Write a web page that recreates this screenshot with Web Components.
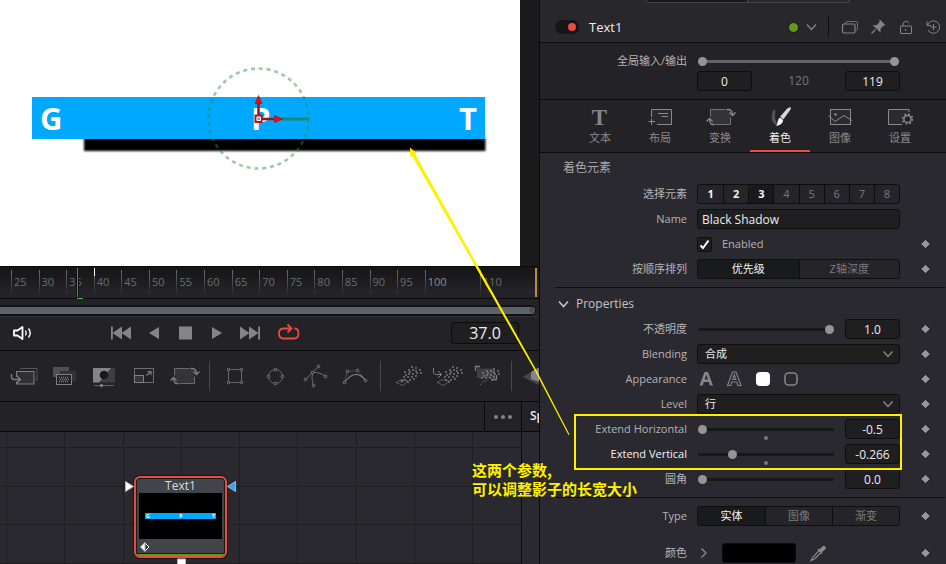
<!DOCTYPE html>
<html lang="zh-CN">
<head>
<meta charset="utf-8">
<title>Text1 - Fusion</title>
<style>
html,body{margin:0;min-height:100%;background:#232226}
body{font-family:"Open Sans","Noto Sans CJK SC",sans-serif;font-size:11px;line-height:16px;color:#b4b4b6;overflow:hidden}
</style>
</head>
<body>
<fusion-app></fusion-app>
<script>
const BASE = `
*{box-sizing:border-box}
button{appearance:none;border:0;margin:0;padding:0;background:none;font:inherit;color:inherit;display:block}
input,select{font:inherit;color:inherit;margin:0;border-radius:3px}
svg{display:block;fill:none;stroke:currentColor}
`;
function define(tag, css, render) {
  customElements.define(tag, class extends HTMLElement {
    connectedCallback() {
      if (this.shadowRoot) return;
      this.attachShadow({mode: 'open'}).innerHTML =
        `<style>${BASE}${css}</style>${render((n, d = '') => this.getAttribute(n) ?? d)}`;
    }
  });
}

/* ---------- inspector fields ---------- */
const FIELD = `
:host{display:grid;grid-template-columns:157px minmax(0,1fr) 46px;align-items:center;min-height:20px}
:host([active]) .label{color:#f2f2f2}
.label{text-align:right;padding-right:10px;white-space:nowrap}
.box{width:100%;height:20px;background:#1f1f1f;border:1px solid #0e0e10;color:#ececec;font-size:12px;padding:0 4px;outline:0}
.num{text-align:center}
.slide{display:grid;grid-template-columns:minmax(0,1fr) 55px;column-gap:11px;padding-left:1px;align-items:center}
.rail{position:relative;display:grid;align-items:center}
.rail i{position:absolute;left:50%;top:100%;width:4px;height:4px;margin:2px 0 0 -2px;border-radius:50%;background:#77777b}
input[type=range]{appearance:none;width:100%;height:10px;background:none;outline:0}
input[type=range]::-webkit-slider-runnable-track{height:3px;background:#18181a;border-radius:2px}
input[type=range]::-webkit-slider-thumb{appearance:none;width:9px;height:9px;margin-top:-3px;border-radius:50%;background:#959595}
`;
define('key-diamond', `:host{display:block;padding-left:17px}`, () =>
  `<button aria-label="Keyframe"><svg width="16" height="16"><path d="M8.500 3.200 13.500 8 8.500 12.800 3.500 8z" fill="#98989b" stroke="#131315"/></svg></button>`);

define('field-slider', FIELD, a => `
<label class="label" for="s">${a('label')}</label>
<div class="slide"><div class="rail"><input id="s" type="range" min="${a('min','0')}" max="${a('max','1')}" step="0.001" value="${a('value')}">${a('center') ? '<i></i>' : ''}</div>
<input class="box num" aria-label="${a('label')}" value="${a('value')}"></div><key-diamond></key-diamond>`);

define('field-text', FIELD, a => `
<label class="label" for="t">${a('label')}</label><input id="t" class="box" value="${a('value')}">`);

define('field-select', FIELD + `
.wrap{display:grid;align-items:center}.wrap>*{grid-area:1/1}
select{appearance:none;padding:0 24px 0 7px!important;font-size:11px!important;line-height:16px}
svg{justify-self:end;margin-right:6px;pointer-events:none;color:#8b8b8d}`, a => `
<label class="label" for="c">${a('label')}</label><div class="wrap"><select id="c" class="box"><option>${a('value')}</option></select>
<svg width="12" height="12"><path d="M1.500 3.500 6 8.500 10.500 3.500" stroke-width="1.300"/></svg></div><key-diamond></key-diamond>`);

define('field-check', FIELD + `
.ck{display:flex;align-items:center;gap:10px}.w{display:grid;width:15px}.w>*{grid-area:1/1}
input{appearance:none;width:15px;height:15px;border:1px solid #0e0e10;background:#1f1f1f;border-radius:2px}
svg{opacity:0;pointer-events:none}input:checked+svg{opacity:1}`, a => `
<span></span><div class="ck"><span class="w"><input id="k" type="checkbox" checked><svg width="15" height="15"><path d="M3.500 8.500 6 11 11.500 3.500" stroke="#fff" stroke-width="2"/></svg></span><label for="k">${a('label')}</label></div><key-diamond></key-diamond>`);

define('field-segments', FIELD + `
.seg{display:grid;grid-auto-flow:column;grid-auto-columns:minmax(0,1fr);height:20px;border:1px solid #0e0e10;border-radius:3px;overflow:hidden;background:#252529;color:#7b7b7e}
button{border-left:1px solid #0e0e10}button:first-child{border:0}
.on{color:#f4f4f4}.cur{color:#f4f4f4;background:#191a1b}.on,.bold .cur{font-weight:700}`, a => {
  const on = a('on').split(','), cur = a('current');
  return `<span class="label" id="l">${a('label')}</span><div class="seg ${on.length > 1 ? 'bold' : ''}" role="group" aria-labelledby="l">${
    a('items').split(',').map(t => `<button aria-pressed="${t === cur || on.includes(t)}" class="${t === cur ? 'cur' : on.includes(t) ? 'on' : ''}">${t}</button>`).join('')
  }</div>${a('nokey') ? '' : '<key-diamond></key-diamond>'}`;
});

define('field-appearance', FIELD + `
.set{display:flex;gap:8px}button{width:20px;height:20px}svg{color:#858587}`, () => `
<span class="label" id="l">Appearance</span><div class="set" role="group" aria-labelledby="l">
<button aria-label="Text fill"><svg width="20" height="20"><path d="M2.500 16.500 7.500 3h3.500l5 13.500h-3.200L11.800 13h-5L5.700 16.500zM7.700 10.500h3.200L9.300 5.800z" fill="#858587" stroke="none"/></svg></button>
<button aria-label="Text outline"><svg width="20" height="20"><path d="M2.500 16.500 7.500 3h3.500l5 13.500h-3.200L11.800 13h-5L5.700 16.500zM7.700 10.500h3.200L9.300 5.800z" stroke-width="1.100"/></svg></button>
<button aria-label="Border fill" aria-pressed="true"><svg width="20" height="20"><rect x="3" y="3" width="14" height="14" rx="4" fill="#fff" stroke="none"/></svg></button>
<button aria-label="Border outline"><svg width="20" height="20"><rect x="4" y="4" width="12" height="12" rx="3.500" stroke-width="1.600"/></svg></button>
</div><key-diamond></key-diamond>`);

define('field-color', FIELD + `
.c{display:flex;align-items:center}.sw{width:74px;height:20px;background:#000;border:1px solid #0c0c0d;border-radius:3px;margin:0 12px 0 11px}
svg{color:#8b8b8d}`, a => `
<span class="label" id="l">${a('label')}</span><div class="c" role="group" aria-labelledby="l">
<button aria-label="Expand"><svg width="14" height="14"><path d="M4.500 2.500 9 7 4.500 11.500" stroke-width="1.300"/></svg></button>
<button class="sw" aria-label="Black"></button>
<button aria-label="Pick color"><svg width="20" height="20"><path d="M3 17.500 5 14 11 7.500l2 2L6.500 16z" stroke-width="1.200"/><path d="M10 6 14.500 10.500M11.500 7.500 15 4a1.200 1.200 0 0 1 1.700 1.700L13 9z" fill="currentColor" stroke-width="1.500"/></svg></button>
</div><key-diamond></key-diamond>`);

/* ---------- inspector ---------- */
define('inspector-header', `
:host{display:block;height:43px;background:#28272c;border-bottom:1px solid #0c0c0e}
.views{display:grid;grid-template-columns:1fr 1fr;width:204px;height:3px;margin:0 96px 0 auto;border:1px solid #444448;border-top:0;border-radius:0 0 8px 8px;overflow:hidden}
.views button{height:2px}.views button:first-child{background:#18181a;border-right:1px solid #55555a}
.bar{display:flex;align-items:center;height:39px;padding:9px 2px 0 15px;color:#848486}
.tg{appearance:none;display:flex;justify-content:flex-end;align-items:center;width:24px;height:14px;border-radius:7px;background:#161617;padding:0 3px}
.tg::before{content:"";width:8px;height:8px;border-radius:50%;background:#e84c3d}
label{display:flex;align-items:center;gap:10px;font-size:13px;color:#ececec;flex:1}
.ver{display:flex;align-items:center;gap:6px;padding-right:11px;border-right:1px solid #0c0c0e;height:20px;margin-right:11px}
.tools{display:flex;gap:8px}`, () => `
<div class="views"><button aria-label="Tools"></button><button aria-label="Modifiers"></button></div>
<div class="bar"><label><input class="tg" type="checkbox" role="switch" checked>Text1</label>
<button class="ver" aria-label="Versions"><svg width="11" height="11"><circle cx="5.500" cy="5.500" r="5" fill="#5f9a20" stroke="#151516"/></svg><svg width="12" height="12"><path d="M2 3.500 6.500 8.500 11 3.500" stroke-width="1.300"/></svg></button>
<div class="tools">
<button aria-label="Window"><svg width="20" height="20"><path d="M5.500 7V6q0-1.500 1.500-1.500h9q1.500 0 1.500 1.500v6q0 1-1.500 1.500" opacity=".75"/><rect x="2.500" y="7" width="12.500" height="9" rx="1.500" stroke-width="1.200"/></svg></button>
<button aria-label="Pin"><svg width="20" height="20"><path d="m12 3.500 4.500 4.500-1.500.300-3 3v3L6 8.800 9 8.600 12 5.300zM7.500 12.500 3.500 16.500" fill="currentColor" stroke-width="1.100"/></svg></button>
<button aria-label="Lock"><svg width="20" height="20"><rect x="4.500" y="9" width="11" height="7.500" rx=".500"/><path d="M7 9V7a3.200 3.200 0 0 1 6-1"/><path d="M9.500 12v2" /></svg></button>
<button aria-label="Reset"><svg width="20" height="20"><path d="M3.600 8A6.200 6.200 0 1 1 4 13M3 4.500v4h4M9.500 7v6M6.500 10h6"/></svg></button>
</div></div>`);

define('global-range', FIELD + `
:host{align-content:start;height:57px;padding-top:10px;background:#232226;border-bottom:1px solid #0c0c0e;row-gap:2px}
.label{line-height:16px}
.rail{padding-left:1px;padding-right:1px}.rail>*{grid-area:1/1}
.rail input::-webkit-slider-runnable-track{background:#60656a}
.rail input+input::-webkit-slider-runnable-track{background:none}
.rail input+input{pointer-events:none}.rail input+input::-webkit-slider-thumb{pointer-events:auto}
.vals{grid-column:2;display:grid;grid-template-columns:55px 1fr 55px;align-items:center;text-align:center;font-size:12px;color:#777779}
`, () => `<label class="label" for="in">全局输入/输出</label>
<div class="rail"><input id="in" type="range" min="0" max="119" value="0"><input aria-label="输出" type="range" min="0" max="119" value="119"></div><span></span>
<div class="vals"><input class="box num" aria-label="In" value="0"><span>120</span><input class="box num" aria-label="Out" value="119"></div>`);

const TRANSFORM = (x, y, w, h) => `<rect x="${x}" y="${y}" width="${w}" height="${h}" fill="#333338" stroke="none"/>
<path d="M${x} ${y + 7}V${y}H${x + w - 5}M${x + w} ${y + h - 7}V${y + h}H${x + 5}" opacity=".75"/>
<path d="M${x + w - 4} ${y}h2q4 0 4 6m-3-3 3 3 3-3M${x + 4} ${y + h}h-2q-3 0-3-6m-3 3 3-3 3 3" stroke-width="1.300"/>`;
define('page-tabs', `
:host{display:grid;grid-template-columns:repeat(6,minmax(0,1fr));height:53px;padding:0 16px 0 30px;background:#232226;border-bottom:1px solid #0c0c0e}
button{display:flex;flex-direction:column;align-items:center;padding-top:2px;height:52px;color:#8a8a8c}
svg text{font:700 23px "Liberation Serif",serif;fill:#858587;stroke:none}
button[aria-selected=true]{color:#ececec;border-bottom:2px solid #e84c3d}
svg{margin-bottom:-2px}`, () => {
  const tabs = [
    ['文本', `<text x="29.500" y="22.500" text-anchor="middle">T</text>`],
    ['布局', `<rect x="21.500" y="7.500" width="20" height="15" fill="#2b2b2f" stroke="none"/><path d="M21.500 15V7.500h20v15H27M28 11.500h10M31.500 14.500h6.500M18.500 19.500h6.500M21.500 16.500v6.500"/>`],
    ['变换', TRANSFORM(20.5, 7.5, 20, 15)],
    ['着色', `<path d="M24 8q-4 8 0 13 2 2 4 2-5-5-3-14z" fill="#55555a" stroke="#55555a"/><path d="M40 5.300q2 0 0 3l-6.500 9-3.500-2.500 7.500-8.500z" fill="#d8d8d8" stroke="none"/><path d="M29 16q4 0 4 3-1 4-7 5 2-1.500 1.500-4z" fill="#fff" stroke="none"/>`],
    ['图像', `<rect x="20.500" y="7.500" width="20" height="15" fill="#2b2b2f"/><path d="M18.500 13.500l6.500 6 9-6 8 5"/><circle cx="25.500" cy="12.500" r="1.300" fill="currentColor" stroke="none"/>`],
    ['设置', `<path d="M32 22.500H18.500v-15H39V10" fill="#2b2b2f"/><circle cx="37.500" cy="17" r="3.600" stroke-width="1.500"/><circle cx="37.500" cy="17" r="5" stroke-width="1.500" stroke-dasharray="1.800 2.130"/>`]];
  return tabs.map(([t, i], n) => `<button role="tab" aria-selected="${n === 3}"><svg width="60" height="30">${i}</svg>${t}</button>`).join('');
});

define('inspector-panel', `
:host{display:block;background:#2a292f;min-width:0;overflow:hidden}
.body{padding:5px 0 0}
h2,h3{margin:0;font-weight:400;font-size:12px;line-height:20px}
h2{padding:0 0 6px 23px;color:#a8a8aa}
.rows{display:grid;row-gap:5px}
h3{display:flex;align-items:center;height:31px;gap:7px;padding-left:17px;color:#c4c4c6}
hr{border:0;height:1px;margin:8px 1px 0 15px;background:#0e0e10}
.type{padding-top:8px;row-gap:17px}`, () => `
<inspector-header></inspector-header><global-range></global-range><page-tabs role="tablist"></page-tabs>
<div class="body"><h2>着色元素</h2><div class="rows">
<field-segments label="选择元素" items="1,2,3,4,5,6,7,8" on="1,2,3" current="3" nokey="1"></field-segments>
<field-text label="Name" value="Black Shadow"></field-text>
<field-check label="Enabled"></field-check>
<field-segments label="按顺序排列" items="优先级,Z轴深度" current="优先级"></field-segments></div>
<hr><h3><svg width="12" height="12"><path d="M2 3.500 6.500 8.500 11 3.500" stroke-width="1.600"/></svg>Properties</h3>
<div class="rows">
<field-slider label="不透明度" value="1.0"></field-slider>
<field-select label="Blending" value="合成"></field-select>
<field-appearance></field-appearance>
<field-select label="Level" value="行"></field-select>
<field-slider label="Extend Horizontal" min="-0.5" max="0.5" value="-0.5" center="1"></field-slider>
<field-slider active label="Extend Vertical" min="-0.5" max="0.5" value="-0.266" center="1"></field-slider>
<field-slider label="圆角" value="0.0"></field-slider></div>
<hr><div class="rows type">
<field-segments label="Type" items="实体,图像,渐变" current="实体"></field-segments>
<field-color label="颜色"></field-color></div></div>`);

/* ---------- viewer ---------- */
define('comp-viewer', `
:host{display:block;background:#1a1a1a;padding-right:19px}
svg{width:100%;height:auto;background:#fff}
text{font:700 31px "Open Sans",sans-serif;fill:#fff;stroke:none}`, () => `
<svg viewBox="0 0 520 266"><defs><filter id="b"><feGaussianBlur stdDeviation="1.200"/></filter></defs>
<rect x="84" y="138" width="401.500" height="13" fill="#000" stroke="none" filter="url(#b)"/>
<rect x="86" y="138" width="398" height="10" fill="#000" stroke="none"/>
<rect x="32" y="97" width="453" height="42" fill="#00a8ff" stroke="none"/>
<text x="40" y="130">G</text><text x="251" y="130">P</text><text x="459" y="130">T</text>
<circle cx="258.500" cy="118.500" r="50" stroke="#2b8b35" stroke-opacity=".45" stroke-width="2.600" stroke-dasharray="4 3.850"/>
<path d="M281 119h28" stroke="#158a76" stroke-width="3"/>
<path d="M258.500 115V102M262 119h12" stroke="#a01018" stroke-width="2.500"/>
<path d="M258.500 95.500l3.500 8h-7zM282.500 119l-8 3.500v-7z" fill="#f00" stroke="#a01018" stroke-width=".600"/>
<rect x="255.500" y="115.500" width="6" height="6.500" fill="#8a9a98" stroke="#c01020" stroke-width="2"/><path d="M257 117h3.500v3.500H257z" stroke="#e8f4f4"/></svg>`);

define('time-ruler', `
:host{display:block;position:relative;background:linear-gradient(#151517,#242328 80%);border-top:1px solid #0a0a0b;border-bottom:1px solid #0a0a0b;height:33px}
.t{display:grid;grid-template-columns:repeat(19,minmax(0,1fr));padding:3px 4px 0 11px;color:#6c6c6f}
span{position:relative;height:25px;padding:4px 0 0 3px;white-space:nowrap}
.major{color:#8c8c8f}
span::before{content:"";position:absolute;left:0;top:0;width:1px;height:25px;background:linear-gradient(#6c6c6f,#28282b)}
.play,.key,.mark,.end{position:absolute}
.play{left:77px;top:1px;width:1px;height:29px;background:#e84c3d;outline:1px solid #101011}
.key{left:94px;top:1px;width:1px;height:8px;background:#fff}
.mark{left:77px;top:31px;width:6px;height:1px;background:#35c23e}
.end{right:2px;top:1px;width:2px;height:29px;background:#b8912c}`, () => {
  let s = '';
  for (let v = 25; v <= 110; v += 5) s += v === 105 ? '<b></b>' : `<span${v === 100 ? ' class="major"' : ''}>${v}</span>`;
  return `<div class="t">${s}</div><i class="key"></i><i class="play"></i><i class="mark"></i><i class="end"></i>`;
});

define('time-scroll', `
:host{display:block;background:#232226;padding:6px 3px 0 0;border-bottom:1px solid #313134}
.tr{background:#131315;padding:2px 1px 2px 0;border-radius:0 6px 6px 0}
.th{height:7px;background:#5e626a;border-radius:0 4px 4px 0;display:flex;justify-content:end}
i{width:6px;height:6px;border-radius:50%;background:#4c4f56}`, () => `<div class="tr"><div class="th"><i></i></div></div>`);

define('transport-bar', `
:host{display:flex;align-items:center;height:34px;background:#232226;border-bottom:1px solid #0a0a0b;padding:0 20px 2px 10px;color:#858587}
.m{color:#fff;margin-right:73px}.p{display:flex;gap:3px;flex:1}
.p svg path{fill:currentColor;stroke:none}.loop{color:#e84c3d}.p .loop path{fill:none;stroke:currentColor}
input{width:68px;height:22px;background:#1f1f1f;border:1px solid #0c0c0d;text-align:center;font-size:16px;color:#f0f0f0;padding:0}`, () => `
<button class="m" aria-label="Audio"><svg width="24" height="20"><path d="M4 7.500h3.500L12.500 4v12L7.500 12.500H4z" stroke-width="1.800" stroke-linejoin="round"/><path d="M15.500 7.500q1.500 2.500 0 5M18.500 5.500q3.500 4.500 0 9" stroke-width="1.400"/></svg></button>
<div class="p">
<button aria-label="First"><svg width="28" height="20"><path d="M4 3.500h1.800v13H4zM15 3.500v13L5.500 10zM24 3.500v13L14.500 10z"/></svg></button>
<button aria-label="Reverse"><svg width="32" height="20"><path d="M21 4v12L11 10z"/></svg></button>
<button aria-label="Stop"><svg width="25" height="20"><path d="M6 3.500h13v13H6z"/></svg></button>
<button aria-label="Play"><svg width="32" height="20"><path d="M11 4v12L21 10z"/></svg></button>
<button aria-label="Last"><svg width="28" height="20"><path d="M22.200 3.500H24v13h-1.800zM4 3.500v13l9.500-6.500zM13 3.500v13l9.500-6.500z"/></svg></button>
<button class="loop" aria-label="Loop"><svg width="48" height="20"><path d="M17 5.500h-.500q-4.500 0-4.500 5t4.500 5h10.500q4.500 0 4.500-5t-4-5M16 5.500h8M20.500 1.500l4 4-4 4" stroke-width="1.800"/></svg></button>
</div><input aria-label="Current time" value="37.0">`);

const nodes = pts => pts.map(([x, y]) => `<circle cx="${x}" cy="${y}" r="1.300" fill="#232226"/>`).join('');
const SPRAY = [[27,13],[31,14],[24,16],[28,16],[35,16],[20,18],[25,18],[31,17],[21,21],[24,20],[28,20],[32,19],[36,19],[19,23],[23,23],[27,23],[31,22],[20,26],[25,26],[29,25],[23,28]];
const dots = (ox, oy, pts = SPRAY) =>
  `<g fill="currentColor" stroke="none">${pts.map(([x, y]) => `<circle cx="${x + ox}" cy="${y + oy}" r=".9"/>`).join('')}</g>`;
define('tool-strip', `
:host{display:flex;height:51px;background:#232226;border-bottom:1px solid #0a0a0b;padding-left:4px;overflow:hidden;color:#808083}
button{flex:0 0 40px}i{flex:0 0 11px;align-self:center;height:30px;background:linear-gradient(#49494c,#49494c) center/1px 100% no-repeat}`, () => {
  const t = {
    Merge: `<path d="M16.500 18V17.500H33V29H31" opacity=".55"/><rect x="12.500" y="20.500" width="17.500" height="12.500" fill="#303035"/><path d="M10 28h6" stroke="#232226" stroke-width="5"/><path d="M7.500 23v3q0 2.500 3 2.500H16M12.500 24.500l4 4-4 4" stroke-width="1.300"/>`,
    'Channel Booleans': `<path d="M9 16h16v10H9z" fill="#505053" stroke="none"/><path d="M16 20h16v10H16z" fill="#333337" stroke="none"/><rect x="12.500" y="23.500" width="15" height="10" fill="#232226"/><path d="M15 26.500h10M16 28.500h10M15 30.500h10" stroke-dasharray="1 1" stroke-width="1.300"/>`,
    'Color Corrector': `<path d="M9 17h22v14.500H9z" fill="#3f3f43" stroke="none"/><path d="M9 17h18L15 31.500H9z" fill="#858588" stroke="none"/><circle cx="20" cy="24" r="4.300" fill="#1a1a1c" stroke="none"/><path d="M10 34.500h20" opacity=".7"/><circle cx="17.500" cy="34.500" r="1.700" fill="currentColor" stroke="none"/>`,
    Resize: `<rect x="10.500" y="17.500" width="19" height="14" opacity=".8"/><rect x="10.500" y="24.500" width="9" height="7" fill="#35353a"/><path d="M22.500 24.500 27 20.500M23.500 20.500H27V24" stroke-width="1.200"/>`,
    Transform: TRANSFORM(10.5, 17.5, 20, 15),
    '-1': '',
    Rectangle: `<path d="M13.500 18.500h13v13h-13z" opacity=".7"/>` + nodes([[13.5, 18.5], [26.5, 18.5], [26.5, 31.5], [13.5, 31.5]]),
    Ellipse: `<circle cx="20.500" cy="25.500" r="7" opacity=".7"/>` + nodes([[20.5, 18.5], [27.5, 25.5], [20.5, 32.5], [13.5, 25.5]]),
    Polygon: `<path d="M23.500 15.500 10.500 28.500M18.500 34.500Q16 27 17.500 21.500 26 21 30.500 25.500" opacity=".8"/>` + nodes([[23.5, 15.5], [17.5, 21.5], [10.5, 28.5], [30.5, 25.5], [18.5, 34.5]]),
    BSpline: `<path d="M9.500 31.500 12.500 20.500 22.500 19.500 30.500 29.500" opacity=".45"/><path d="M9.500 31.500q11-15 21-2" stroke-width="1.200"/>` + nodes([[9.5, 31.5], [12.5, 20.5], [22.5, 19.5], [30.5, 29.5]]),
    '-2': '',
    pEmitter: `<path d="M10 31.500 16 28.500l6 1.500-5 4.500z" opacity=".6"/>` + dots(-5 + 0, 3, SPRAY.map(([x, y]) => [x + 4, y])) + `<circle cx="16" cy="30" r="1"/>`,
    pMerge: `<path d="M7.500 17v4q0 2.500 3 2.500H15M12 20l3.500 3.500L12 27"/><path d="M11 31.500 17 28.500l6 1.500-5 4.500z" opacity=".6"/>` + dots(0, 3),
    pRender: `<path d="M11 17.500h18v9.500H11z" fill="#404044" stroke="none"/><path d="M9.500 20v-4.500H14M30.500 24v4.500H26" stroke-width="1.300"/>` + dots(-3, 4, SPRAY.filter(([x, y]) => y > 13 && y < 26)) + `<path d="M14 34q3-4 8-5" stroke-dasharray="1.500 1.500"/>`,
    '-3': '',
    'Image Plane': `<path d="M6 26 22 16v18z" fill="#48484c" stroke="none"/><path d="m14 21 9-5v15l-9-3z" fill="#858588" stroke="none"/>`};
  return Object.entries(t).map(([k, v]) => k[0] === '-' ? '<i></i>' : `<button aria-label="${k}"><svg width="40" height="50">${v}</svg></button>`).join('');
});

/* ---------- node graph ---------- */
define('flow-node', `
:host{display:block;width:93px;height:82px}
.n{height:100%;background:#414448;border:2px solid #e84c3d;border-radius:6px;box-shadow:0 0 0 1px #18181a,inset 0 0 0 1px #1c1c1e;display:flex;flex-direction:column;overflow:hidden}
.h{text-align:center;color:#dcdcde;line-height:15px;font-size:12px}
.th{height:46px;margin:0 3px;background:#000;display:grid;align-items:center}
.s{display:flex;justify-content:space-between;height:6px;margin:0 6px;background:#00a8ff;color:#fff;font:700 5px/6px "Open Sans",sans-serif;padding:0 1px}
.k{flex:1;padding:3px 0 0 4px}.g{height:3px;background:#5f9a20;border-top:1px solid #18181a}`, () => `
<div class="n"><div class="h">Text1</div><div class="th"><div class="s"><span>G</span><span>P</span><span>T</span></div></div>
<div class="k"><svg width="10" height="10" stroke="none"><path d="M5 1 9 5 5 9 1 5z" fill="#333" stroke="#fff"/><path d="M5 .500V9.500L.500 5z" fill="#fff"/></svg></div><div class="g"></div></div>`);

define('node-graph', `
:host{flex:1;display:grid;grid-template-columns:minmax(0,1fr) 18px;grid-template-rows:30px minmax(0,1fr);min-height:0;background:#2a292f}
.bar{display:flex;justify-content:flex-end;background:#232226;border-bottom:1px solid #0a0a0b}
.bar button{width:37px;border-left:1px solid #0a0a0b}.bar svg{margin:auto}
.sp{background:#232226;border-left:1px solid #0a0a0b;border-bottom:1px solid #0a0a0b;color:#ececec;font-weight:600;font-size:12px;padding:6px 0 0 8px;overflow:hidden;white-space:nowrap}
.cv{position:relative;overflow:hidden}.grid{width:100%;height:100%;position:absolute}
.side{border-left:1px solid #0a0a0b}
flow-node{position:absolute;left:134px;top:44px}.ports{position:absolute;left:120px;top:44px}`, () => {
  let g = '';
  for (let i = 0; i < 40; i++) g += `M${Math.round(6 + i * 58.25)}.5 0V2000M0 ${Math.round(15 + i * 38.7)}.5H3000`;
  return `<div class="bar"><button aria-label="More"><svg width="20" height="6"><path d="M1 3a2 2 0 1 0 4 0a2 2 0 1 0-4 0M8 3a2 2 0 1 0 4 0a2 2 0 1 0-4 0M15 3a2 2 0 1 0 4 0a2 2 0 1 0-4 0" fill="#858587" stroke="none"/></svg></button></div>
<div class="sp">Sp</div><div class="cv"><svg class="grid"><path d="${g}" stroke="#1f1f22"/></svg><flow-node></flow-node>
<svg class="ports" width="120" height="90" stroke="#111"><path d="M5.500 5.500v10l8-5z" fill="#fff"/><path d="M115.500 5.500v10l-8-5z" fill="#27a9f5"/><path d="M57.500 83h8v9h-8z" fill="#fff"/></svg></div><div class="side"></div>`;
});

/* ---------- callout over the panels ---------- */
define('param-callout', `
:host{position:absolute;inset:0;pointer-events:none}
svg{position:absolute;left:400px;top:140px;stroke:none;fill:#fff000}
.box{position:absolute;left:574px;top:414px;width:328px;height:56px;border:2px solid #fff000}
p{position:absolute;left:472px;top:460px;margin:0;font:700 15px/19px "Noto Sans CJK SC",sans-serif;color:#fff000;white-space:nowrap}`, () => `
<svg width="180" height="300"><path d="M10 7.500 16.800 13.500 15.300 14.500 136 229.500 169.500 294.500 168.500 295 134.500 230 12.200 16 10.300 17z"/></svg>
<div class="box"></div><p>这两个参数,<br>可以调整影子的长宽大小</p>`);

define('fusion-app', `
:host{position:relative;display:grid;grid-template-columns:minmax(0,540fr) minmax(0,406fr);height:100vh;overflow:hidden}
.left{display:flex;flex-direction:column;min-width:0;min-height:0;border-right:1px solid #0a0a0b}`, () => `
<div class="left"><comp-viewer></comp-viewer><time-ruler></time-ruler><time-scroll></time-scroll><transport-bar></transport-bar><tool-strip></tool-strip><node-graph></node-graph></div>
<inspector-panel></inspector-panel><param-callout></param-callout>`);
</script>
</body>
</html>
